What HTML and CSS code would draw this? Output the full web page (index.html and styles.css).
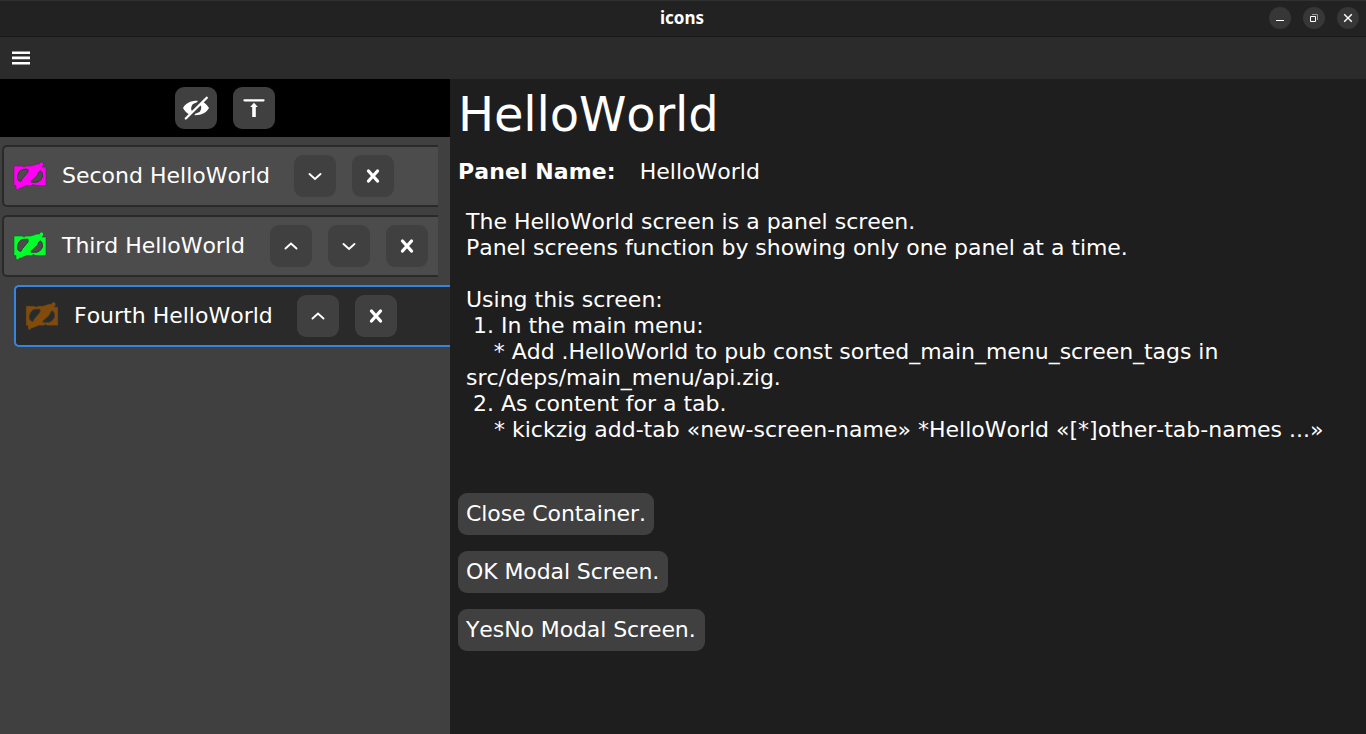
FILE: index.html
```html
<!DOCTYPE html>
<html lang="en">
<head>
<meta charset="utf-8">
<title>icons</title>
<link rel="stylesheet" href="styles.css">
</head>
<body>
<svg class="defs" width="0" height="0">
  <symbol id="eye" viewBox="0 0 34 30">
    <path class="edge" d="M1 5H9L11 6L13 5H17.500L21 4L24 3L26.500 3V2L28.500 1L30.500 2V4.500L29 6H33V24.500H22.500L20.500 23.500L18.500 24.500H14L10 26L8 27H6.500L5 29L3 28V24.500H1Z"/>
    <path class="hole" d="M4.500 14.500L6 11L8 9L11 8.300H15V11L12.500 14L9.500 17.500L7.800 20.500L5.500 19.500L4.500 17.500Z"/>
    <path class="hole" d="M27.500 9.800L29.200 12L29.500 16L27.500 19.300L24 21.200H18V20L21 17.500L24.500 14L26 10.800Z"/>
  </symbol>
  <symbol id="up" viewBox="0 0 42 42"><path class="chev" d="M15.500 23.500L21 18.500L26.500 23.500"/></symbol>
  <symbol id="down" viewBox="0 0 42 42"><path class="chev" d="M15.500 19L21 24L26.500 19"/></symbol>
  <symbol id="cross" viewBox="0 0 42 42"><path class="cross" d="M16.500 16L25.500 26M25.500 16L16.500 26"/></symbol>
</svg>
<header class="titlebar">
  <h1 class="window-title">icons</h1>
  <div class="window-controls">
    <svg viewBox="0 0 22 22"><circle cx="11" cy="11" r="11"/><path fill="#fff" d="M7 13h8v1H7z"/></svg>
    <svg viewBox="0 0 22 22"><circle cx="11" cy="11" r="11"/><path fill="none" stroke="#999" d="M9 7.500H14.500V13"/><path fill="none" stroke="#fff" d="M7.500 9.500h5v5h-5z"/></svg>
    <svg viewBox="0 0 22 22"><circle cx="11" cy="11" r="11"/><path fill="none" stroke="#fff" stroke-width="1.400" d="M7.200 7.200l7.600 7.600m0-7.600l-7.600 7.600"/></svg>
  </div>
</header>
<nav class="menubar">
  <svg width="18" height="14" viewBox="0 0 18 14"><path fill="#fff" d="M0 .4h18v2.600H0zM0 5.500h18v2.700H0zM0 10.900h18v2.700H0z"/></svg>
</nav>
<div class="body">
  <aside class="sidebar">
    <div class="tools">
      <button class="icon-btn"><svg viewBox="0 0 42 42"><path fill="#fff" d="M8 21C10.500 16.500 15 13.800 22.500 13.800V15L18 17C15.500 20 16 23 17.200 24L14.500 27.500C11.500 26 9.500 24 8 21ZM27.500 14.800C30.500 16.200 32.500 18.500 34 21C31.500 25.500 27 28.300 19.800 28.200V27L24.500 25C27 22 26.500 19 25 18Z"/><path fill="none" stroke="#fff" stroke-width="2.300" stroke-linecap="round" d="M10.800 31.500L31.800 10.700"/></svg></button>
      <button class="icon-btn"><svg viewBox="0 0 42 42"><path fill="none" stroke="#fff" stroke-width="2.300" stroke-linecap="round" d="M11.500 13.300H30.500"/><path fill="#fff" d="M21 15.700L24.800 20H22.800V30H19.200V20H17.200Z"/></svg></button>
    </div>
    <div class="tabs">
      <div class="tab">
        <svg class="eye magenta"><use href="#eye"/></svg><span class="tab-name second">Second HelloWorld</span>
        <button class="icon-btn"><svg><use href="#down"/></svg></button>
        <button class="icon-btn"><svg><use href="#cross"/></svg></button>
      </div>
      <div class="tab">
        <svg class="eye green"><use href="#eye"/></svg><span class="tab-name third">Third HelloWorld</span>
        <button class="icon-btn"><svg><use href="#up"/></svg></button>
        <button class="icon-btn"><svg><use href="#down"/></svg></button>
        <button class="icon-btn"><svg><use href="#cross"/></svg></button>
      </div>
      <div class="tab selected">
        <svg class="eye brown"><use href="#eye"/></svg><span class="tab-name fourth">Fourth HelloWorld</span>
        <button class="icon-btn"><svg><use href="#up"/></svg></button>
        <button class="icon-btn"><svg><use href="#cross"/></svg></button>
      </div>
    </div>
  </aside>
  <main class="panel">
    <h2 class="heading">HelloWorld</h2>
    <div class="name-row"><strong>Panel Name:</strong><span>HelloWorld</span></div>
    <div class="description">The HelloWorld screen is a panel screen.
<span class="snug">Panel screens function by showing only one panel at a time.</span>

Using this screen:
 1. In the main menu:
<span class="snug">    * Add .HelloWorld to pub const sorted_main_menu_screen_tags in
src/deps/main_menu/api.zig.</span>
 2. As content for a tab.
    * kickzig add-tab «new-screen-name» *HelloWorld «[*]other-tab-names ...»</div>
    <div class="actions">
      <button class="text-btn close">Close Container.</button>
      <button class="text-btn ok">OK Modal Screen.</button>
      <button class="text-btn yesno">YesNo Modal Screen.</button>
    </div>
  </main>
</div>
</body>
</html>
```
FILE: styles.css
```css
* { box-sizing: border-box; }
body {
  margin: 0;
  height: 734px;
  display: flex;
  flex-direction: column;
  overflow: hidden;
  background: #1e1e1e;
  color: #fff;
  font: 22px/26px "DejaVu Sans", sans-serif;
  font-kerning: none;
}
svg { display: block; flex: none; }
h1, h2 { margin: 0; }
.defs { position: absolute; }
.titlebar {
  display: grid;
  grid-template-columns: 1fr auto 1fr;
  align-items: center;
  height: 37px;
  flex: none;
  padding: 0 7px 2px 5px;
  background: #222;
  border-top: 1px solid #303030;
  border-bottom: 1px solid #181818;
}
.window-title {
  grid-column: 2;
  padding-top: 1px;
  font: bold 17px/22px "Noto Sans", sans-serif;
}
.window-controls { display: flex; gap: 12px; justify-content: flex-end; }
.window-controls svg { width: 22px; height: 22px; fill: #373737; }
.menubar {
  display: flex;
  align-items: center;
  height: 42px;
  flex: none;
  padding-left: 12px;
  background: #2b2b2b;
}
.body { display: flex; flex: 1; min-height: 0; }
.sidebar { width: 450px; flex: none; background: #404040; overflow: hidden; }
.tools {
  display: flex;
  justify-content: center;
  gap: 16px;
  padding: 8px 0;
  height: 58px;
  background: #000;
}
.icon-btn, .text-btn {
  display: block;
  flex: none;
  height: 42px;
  padding: 0;
  border: 0;
  border-radius: 9px;
  background: #404040;
  color: #fff;
  font: inherit;
  font-kerning: none;
}
.icon-btn { width: 42px; }
.icon-btn svg { width: 42px; height: 42px; }
.chev { fill: none; stroke: #fff; stroke-width: 1.900; stroke-linecap: round; }
.cross { fill: none; stroke: #fff; stroke-width: 3.300; stroke-linecap: round; }
.tabs { display: flex; flex-direction: column; gap: 8px; padding-top: 8px; }
.tab {
  --surface: #4c4c4c;
  display: flex;
  align-items: center;
  width: 436px;
  height: 62px;
  margin-left: 2px;
  padding-left: 9px;
  border: 2px solid #2a2a2a;
  border-right: 0;
  border-radius: 5px 0 0 5px;
  background: var(--surface);
}
.tab.selected { --surface: #2a2a2a; margin-left: 14px; border-color: #3584e4; }
.tab .icon-btn + .icon-btn { margin-left: 16px; }
.eye { width: 34px; height: 30px; }
.edge { fill: currentColor; stroke: #35353580; stroke-width: 1; }
.hole { fill: var(--surface); stroke: #383838; stroke-width: 1; }
.magenta { color: #ff00f5; }
.green { color: #00ff2b; }
.brown { color: #824b0b; }
.tab-name { flex: none; margin-left: 15px; white-space: nowrap; }
.second { width: 232px; }
.third { width: 208px; letter-spacing: -.05px; }
.fourth { width: 223px; }
.panel { flex: 1; min-width: 0; padding: 7px 8px; }
.heading { font-size: 48px; font-weight: 400; line-height: 56px; letter-spacing: -.15px; }
.name-row { display: flex; gap: 24px; margin-top: 17px; }
.name-row strong { letter-spacing: .1px; }
.description { margin-top: 24px; padding-left: 8px; white-space: pre; }
.snug { letter-spacing: -.035px; }
.actions { display: flex; flex-direction: column; align-items: flex-start; gap: 16px; margin-top: 50px; }
.text-btn { padding: 0 8px; text-align: left; white-space: nowrap; letter-spacing: -.1px; }
.close { width: 196px; }
.ok { width: 210px; }
.yesno { width: 247px; }
```
